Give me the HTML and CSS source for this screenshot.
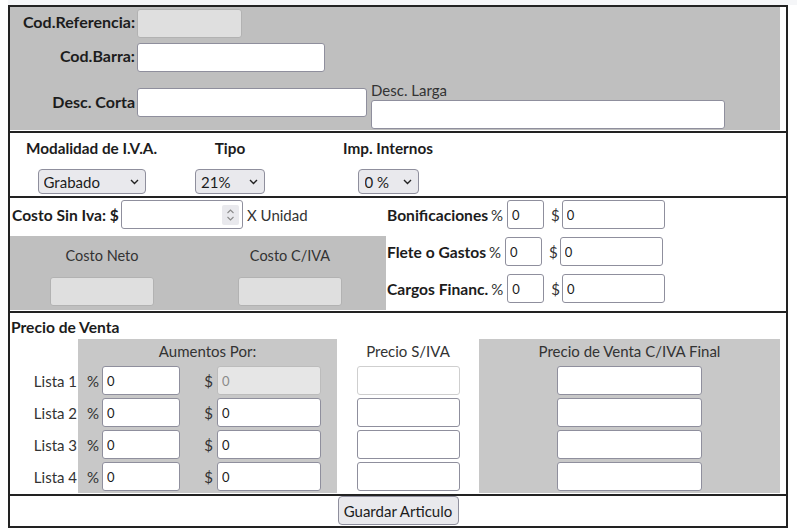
FILE: index.html
```html
<!DOCTYPE html>
<html>
<head>
<meta charset="utf-8">
<link rel="stylesheet" href="styles.css">
</head>
<body>
<div class="topbar"></div>
<div class="form">
  <section class="s1">
    <div class="gray1">
      <div class="r r1"><label class="lbl">Cod.Referencia:</label><input class="in dis w105" disabled></div>
      <div class="r r2"><label class="lbl">Cod.Barra:</label><input class="in w188"></div>
      <div class="r r3"><label class="lbl lbl3">Desc. Corta</label><input class="in w230 dc">
        <div class="dl"><div class="dl-l">Desc. Larga</div><input class="in w354"></div>
      </div>
    </div>
  </section>

  <section class="s2">
    <div class="iva">
      <div class="col"><div class="h">Modalidad de I.V.A.</div>
        <div class="sel"><select class="w108"><option>Grabado</option></select><svg class="chev" width="9" height="6" viewBox="0 0 9 6"><polyline points="1,1 4.5,4.5 8,1" fill="none" stroke="#222" stroke-width="1.4"/></svg></div>
      </div>
      <div class="col"><div class="h">Tipo</div>
        <div class="sel"><select class="w70"><option>21%</option></select><svg class="chev" width="9" height="6" viewBox="0 0 9 6"><polyline points="1,1 4.5,4.5 8,1" fill="none" stroke="#222" stroke-width="1.4"/></svg></div>
      </div>
      <div class="col"><div class="h">Imp. Internos</div>
        <div class="sel"><select class="w61 p6"><option>0 %</option></select><svg class="chev" width="9" height="6" viewBox="0 0 9 6"><polyline points="1,1 4.5,4.5 8,1" fill="none" stroke="#222" stroke-width="1.4"/></svg></div>
      </div>
    </div>
  </section>

  <section class="s3">
    <div class="left">
      <div class="costrow">
        <span class="cl">Costo Sin Iva: $</span>
        <span class="num"><input class="in w122"><span class="spin"><svg width="9" height="16" viewBox="0 0 9 16"><polyline points="1.5,6 4.5,3 7.5,6" fill="none" stroke="#8a8a8a" stroke-width="1.1"/><polyline points="1.5,10 4.5,13 7.5,10" fill="none" stroke="#8a8a8a" stroke-width="1.1"/></svg></span></span>
        <span class="xu">X Unidad</span>
      </div>
      <div class="grayc">
        <div class="gc"><div class="t">Costo Neto</div><input class="in dis w104" disabled></div>
        <div class="gc"><div class="t">Costo C/IVA</div><input class="in dis w104" disabled></div>
      </div>
    </div>
    <div class="right">
      <div class="rr"><b>Bonificaciones</b><span class="pc">%</span><input class="in w37" value="0"><span class="dol">$</span><input class="in w103" value="0"></div>
      <div class="rr"><b>Flete o Gastos</b><span class="pc">%</span><input class="in w37" value="0"><span class="dol">$</span><input class="in w103" value="0"></div>
      <div class="rr"><b>Cargos Financ.</b><span class="pc">%</span><input class="in w37" value="0"><span class="dol">$</span><input class="in w103" value="0"></div>
    </div>
  </section>

  <section class="s4">
    <div class="pt">Precio de Venta</div>
    <div class="tbl">
      <div class="colA">
        <div class="hd"></div>
        <div class="rows">
          <div class="rw la">Lista 1</div>
          <div class="rw la">Lista 2</div>
          <div class="rw la">Lista 3</div>
          <div class="rw la">Lista 4</div>
        </div>
      </div>
      <div class="g1">
        <div class="hd">Aumentos Por:</div>
        <div class="rows">
          <div class="rw au"><span class="sy">%</span><input class="in w78" value="0"><span class="sy sd">$</span><input class="in dis2 w104" value="0" disabled></div>
          <div class="rw au"><span class="sy">%</span><input class="in w78" value="0"><span class="sy sd">$</span><input class="in w104" value="0"></div>
          <div class="rw au"><span class="sy">%</span><input class="in w78" value="0"><span class="sy sd">$</span><input class="in w104" value="0"></div>
          <div class="rw au"><span class="sy">%</span><input class="in w78" value="0"><span class="sy sd">$</span><input class="in w104" value="0"></div>
        </div>
      </div>
      <div class="colC">
        <div class="hd">Precio S/IVA</div>
        <div class="rows">
          <div class="rw ce"><input class="in ro w103"></div>
          <div class="rw ce"><input class="in w103"></div>
          <div class="rw ce"><input class="in w103"></div>
          <div class="rw ce"><input class="in w103"></div>
        </div>
      </div>
      <div class="g2">
        <div class="hd">Precio de Venta C/IVA Final</div>
        <div class="rows">
          <div class="rw ce"><input class="in w145"></div>
          <div class="rw ce"><input class="in w145"></div>
          <div class="rw ce"><input class="in w145"></div>
          <div class="rw ce"><input class="in w145"></div>
        </div>
      </div>
    </div>
  </section>

  <section class="s5">
    <button class="btn">Guardar Articulo</button>
  </section>
</div>
</body>
</html>
```
FILE: styles.css
```css
body {
  margin: 0;
  padding-left: 8px;
  font-family: Lato, "Open Sans", sans-serif;
  font-size: 15px;
  color: #1c1c1c;
  background: #fff;
}
.topbar { height: 5px; background: #f5f6f8; }
.form {
  width: 780px;
  height: 523px;
  box-sizing: border-box;
  border: 2px solid #222;
  overflow: hidden;
}
section { border-bottom: 2px solid #222; }
.s5 { border-bottom: none; }

.in {
  box-sizing: border-box;
  height: 29px;
  border: 1px solid #8f8f9d;
  border-radius: 3px;
  background: #fff;
  font-family: Lato, sans-serif;
  font-size: 13px;
  color: #1c1c1c;
  padding: 0 4px;
  margin: 0;
  outline: none;
}
.in.dis { background: #dfdfdf; border-color: #b2b2b2; }
.in.dis2 { background: #e6e6e6; border-color: #bcbcbc; color: #8a8a8a; }
.in.ro { border-color: #cfcfcf; }
.w37 { width: 37px; }
.w78 { width: 78px; }
.w103 { width: 103px; }
.w104 { width: 104px; }
.w105 { width: 105px; }
.w122 { width: 122px; }
.w145 { width: 145px; }
.w188 { width: 188px; }
.w230 { width: 230px; }
.w354 { width: 354px; }

/* section 1 */
.s1 { height: 124px; }
.gray1 {
  background: #bfbfbf;
  width: 770px;
  height: 123px;
  padding-top: 2px;
  box-sizing: border-box;
}
.r { display: flex; align-items: center; }
.r1 { height: 29px; }
.r2 { height: 29px; margin-top: 5px; }
.r3 { height: 49px; margin-top: 8px; }
.lbl {
  width: 127px;
  padding-right: 2px;
  box-sizing: border-box;
  text-align: right;
  font-weight: 700;
  font-size: 16px;
  white-space: nowrap;
  margin-top: -4px;
}
.lbl3 { margin-top: -7px; }
.dc { margin-top: -4px; }
.dl { margin-left: 4px; display: flex; flex-direction: column; align-self: stretch; }
.dl-l { height: 20px; line-height: 20px; color: #333; }

/* section 2 */
.s2 { height: 63px; }
.iva {
  display: grid;
  grid-template-columns: 163px 114px 202px;
  padding-top: 5px;
}
.col { display: flex; flex-direction: column; align-items: center; }
.h { font-weight: 700; font-size: 15.3px; line-height: 20px; height: 20px; white-space: nowrap; }
.sel { position: relative; margin-top: 11px; height: 25px; }
.sel select {
  appearance: none;
  -webkit-appearance: none;
  height: 25px;
  box-sizing: border-box;
  border: 1px solid #8f8f9d;
  border-radius: 4px;
  background: #e9e9ed;
  font-family: Lato, sans-serif;
  font-size: 15px;
  color: #1c1c1c;
  padding: 0 0 0 5px;
  margin: 0;
}
.sel select.p6 { padding-left: 6px; }
.w108 { width: 108px; }
.w70 { width: 70px; }
.w61 { width: 61px; }
.chev { position: absolute; right: 7px; top: 10px; pointer-events: none; }

/* section 3 */
.s3 {
  height: 113px;
  display: grid;
  grid-template-columns: 376px 1fr;
}
.costrow { display: flex; align-items: center; height: 29px; margin-top: 2px; }
.cl { width: 111px; padding-left: 2px; box-sizing: border-box; font-weight: 700; font-size: 15.6px; white-space: nowrap; }
.num { position: relative; display: block; height: 29px; }
.spin {
  position: absolute;
  right: 4px;
  top: 5px;
  width: 17px;
  height: 20px;
  background: #e9e9ed;
  border-radius: 2px;
  display: flex;
  align-items: center;
  justify-content: center;
}
.xu { margin-left: 4px; color: #333; }
.grayc {
  background: #bfbfbf;
  margin-top: 7px;
  height: 74px;
  display: grid;
  grid-template-columns: 184px 192px;
}
.gc { display: flex; flex-direction: column; align-items: center; padding-top: 10px; }
.gc .t { line-height: 20px; height: 20px; margin-bottom: 11px; color: #333; font-size: 14.5px; }

.right { padding-left: 1px; padding-top: 2px; display: flex; flex-direction: column; gap: 8px; }
.rr { display: flex; align-items: center; height: 29px; }
.rr b { font-weight: 700; font-size: 15.6px; white-space: nowrap; }
.pc { margin-left: 3px; margin-right: 4px; color: #333; }
.dol { margin-left: 7px; margin-right: 2px; color: #333; }

/* section 4 */
.s4 { height: 181px; }
.pt { font-weight: 700; font-size: 15.6px; line-height: 20px; padding: 4px 0 0 1px; }
.tbl { display: flex; margin-top: 2px; }
.colA { width: 68px; }
.g1 { width: 259px; background: #c8c8c8; }
.colC { width: 142px; }
.g2 { width: 301px; background: #c8c8c8; }
.hd { height: 27px; box-sizing: border-box; padding-top: 2px; line-height: 20px; text-align: center; color: #333; white-space: nowrap; }
.rows { display: flex; flex-direction: column; gap: 3px; padding-bottom: 2px; }
.rw { height: 29px; display: flex; align-items: center; }
.la { justify-content: flex-end; padding-right: 1px; color: #333; }
.au { display: grid; grid-template-columns: 24px 78px 37px 104px; align-items: center; }
.sy { text-align: right; padding-right: 3px; color: #333; }
.sd { padding-right: 4px; }
.ce { justify-content: center; }

/* section 5 */
.s5 { height: 30px; display: flex; justify-content: center; align-items: flex-start; }
.btn {
  height: 29px;
  width: 121px;
  box-sizing: border-box;
  border: 1px solid #8f8f9d;
  border-radius: 4px;
  background: #e9e9ed;
  font-family: Lato, sans-serif;
  font-size: 15px;
  color: #1c1c1c;
  padding: 0;
  margin: 0;
}
```
